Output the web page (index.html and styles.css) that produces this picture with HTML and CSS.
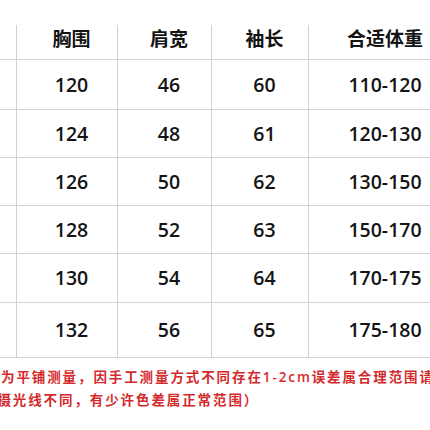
FILE: index.html
```html
<!DOCTYPE html>
<html lang="zh">
<head>
<meta charset="utf-8">
<title>尺码表</title>
<link rel="stylesheet" href="styles.css">
</head>
<body>
<div class="chart">
  <div class="table">
    <div class="cell head first"></div>
    <div class="cell head">胸围</div>
    <div class="cell head">肩宽</div>
    <div class="cell head">袖长</div>
    <div class="cell head">合适体重</div>

    <div class="cell first"></div>
    <div class="cell">120</div>
    <div class="cell">46</div>
    <div class="cell">60</div>
    <div class="cell">110-120</div>

    <div class="cell first"></div>
    <div class="cell">124</div>
    <div class="cell">48</div>
    <div class="cell">61</div>
    <div class="cell">120-130</div>

    <div class="cell first"></div>
    <div class="cell">126</div>
    <div class="cell">50</div>
    <div class="cell">62</div>
    <div class="cell">130-150</div>

    <div class="cell first"></div>
    <div class="cell">128</div>
    <div class="cell">52</div>
    <div class="cell">63</div>
    <div class="cell">150-170</div>

    <div class="cell first"></div>
    <div class="cell">130</div>
    <div class="cell">54</div>
    <div class="cell">64</div>
    <div class="cell">170-175</div>

    <div class="cell first"></div>
    <div class="cell">132</div>
    <div class="cell">56</div>
    <div class="cell">65</div>
    <div class="cell">175-180</div>
  </div>
  <p class="note note-1">为平铺测量，因手工测量方式不同存在1-2cm误差属合理范围请</p>
  <p class="note note-2">拍摄光线不同，有少许色差属正常范围）</p>
</div>
</body>
</html>
```

FILE: styles.css
```css
html, body {
  margin: 0;
  padding: 0;
  background: #ffffff;
}

body {
  width: 430px;
  height: 430px;
  overflow: hidden;
}

.chart {
  width: 430px;
  overflow: hidden;
  padding-top: 25px;
}

.table {
  display: grid;
  grid-template-columns: 100px 101px 94px 97px 144px;
  grid-template-rows: 35px 50px 48px 48px 48px 49px 55px;
  margin-left: -84px;
  width: 536px;
  font-family: "Open Sans", "Noto Sans CJK SC", sans-serif;
  font-size: 19.5px;
  font-weight: 600;
  color: #141414;
}

.cell {
  box-sizing: border-box;
  display: flex;
  align-items: center;
  justify-content: center;
  padding-left: 9px;
  border-left: 1px solid #d2d2d2;
  border-bottom: 1px solid #d2d2d2;
  line-height: 20px;
}

.cell.first {
  border-left: none;
}

.cell.head {
  align-items: flex-start;
  padding-top: 3px;
  font-family: "Noto Sans CJK SC", sans-serif;
  font-size: 19px;
  font-weight: 700;
  line-height: 20px;
}

.note {
  margin: 0;
  white-space: nowrap;
  font-family: "Open Sans", "Noto Sans CJK SC", sans-serif;
  font-size: 13.5px;
  font-weight: 600;
  letter-spacing: 1.9px;
  line-height: 23px;
  color: #d42a2d;
}

.note-1 {
  margin-top: 8px;
  margin-left: 1px;
}

.note-2 {
  margin-left: -18px;
}
```
